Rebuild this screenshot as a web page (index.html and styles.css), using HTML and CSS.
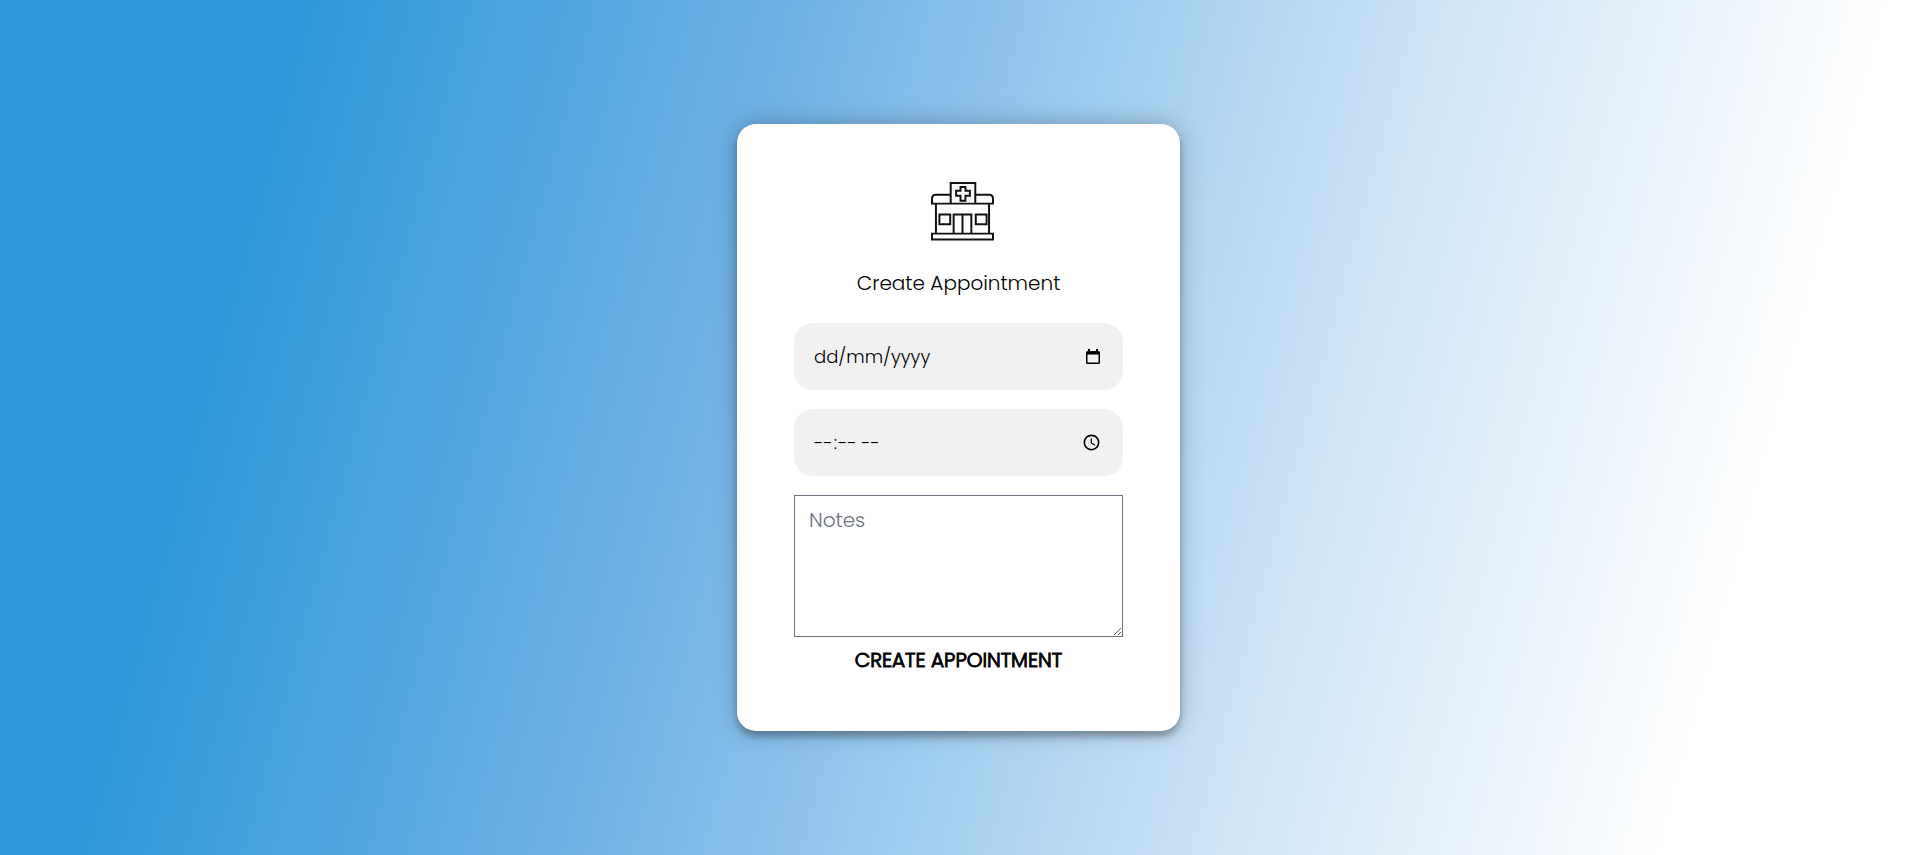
FILE: index.html
```html
<!DOCTYPE html>
<html lang="en">
<head>
<meta charset="utf-8">
<meta name="viewport" content="width=device-width, initial-scale=1">
<title>Create Appointment</title>
<link rel="stylesheet" href="styles.css">
</head>
<body>
<main class="card">
  <svg class="logo" viewBox="0 0 64 60" aria-hidden="true">
    <path d="M20 22V1h25v21M20 13H5q-4 0-4 4v5h62v-5q0-4-4-4H45M5 22v30M59 22v30M1 52.500h62v6H1zM23 52V33h18v19M32 33v19M8.500 33h11v10h-11zM45.500 33h11v10h-11z"/>
    <path d="M30 5h5v4h4.500v5H35v5h-5v-5h-4.500V9H30z"/>
  </svg>
  <h1 class="title">Create Appointment</h1>
  <form class="form">
    <div class="field date">
      <input class="date-text" type="text" aria-label="Date" placeholder="dd/mm/yyyy">
      <button class="picker" type="button" aria-label="Choose date">
        <svg class="calendar" viewBox="0 0 14 16" aria-hidden="true"><path d="M2 0h2v2h6V0h2v2h.5Q14 2 14 3.500v10q0 1.500-1.500 1.500h-11Q0 15 0 13.500v-10Q0 2 1.500 2H2zM1.500 5.500v8h11v-8z"/></svg>
      </button>
    </div>
    <input class="field" type="time" aria-label="Time">
    <textarea class="notes" aria-label="Notes" placeholder="Notes"></textarea>
    <button class="submit" type="submit">CREATE APPOINTMENT</button>
  </form>
</main>
</body>
</html>
```
FILE: styles.css
```css
* { box-sizing: border-box; }
body {
  margin: 0;
  min-height: 100vh;
  display: flex;
  align-items: center;
  justify-content: center;
  font-family: Poppins, Lato, sans-serif;
  font-weight: 300;
  font-size: 20px;
  line-height: 30px;
  color: #000;
  background: linear-gradient(105deg, #2a98da 13%, #6fb1e4 37%, #a4cff0 54%, #cae2f6 66%, #fff 88%);
}
.card {
  width: 443px;
  max-width: 100%;
  padding: 58px 57px 56px;
  border-radius: 19px;
  background: #fff;
  box-shadow: 0 0 24px rgba(0, 0, 0, .25), 0 6px 6px rgba(0, 0, 0, .25);
  display: flex;
  flex-direction: column;
}
.logo {
  width: 63px;
  height: 59px;
  margin-left: 137px;
  fill: none;
  stroke: #111;
  stroke-width: 2;
}
.title {
  margin: 27px 0 25px;
  font: inherit;
  text-align: center;
}
.form { display: flex; flex-direction: column; }
.field {
  width: 100%;
  height: 67px;
  margin: 0 0 19px;
  padding: 0 19px;
  border: 0;
  border-radius: 19px;
  background: #f1f1f1;
  color: inherit;
  font: inherit;
  font-size: 18px;
}
.date {
  display: flex;
  align-items: center;
  padding: 0 23px 0 20px;
}
.date-text {
  flex: 1;
  min-width: 0;
  padding: 0;
  border: 0;
  background: none;
  color: inherit;
  font: inherit;
}
.date-text::placeholder { color: #000; }
.picker { display: flex; padding: 0; border: 0; background: none; }
.calendar { width: 14px; height: 16px; fill: #000; fill-rule: evenodd; }
.notes {
  display: block;
  width: 100%;
  height: 142px;
  padding: 9px 14px;
  border: 1px solid #6b7280;
  border-radius: 0;
  background: #fff;
  font: inherit;
  resize: both;
}
.notes::placeholder { color: #6b7280; }
.submit {
  align-self: center;
  margin-top: 8px;
  padding: 0;
  border: 0;
  background: none;
  color: #000;
  font: inherit;
  -webkit-text-stroke: 1px #000;
}
```
